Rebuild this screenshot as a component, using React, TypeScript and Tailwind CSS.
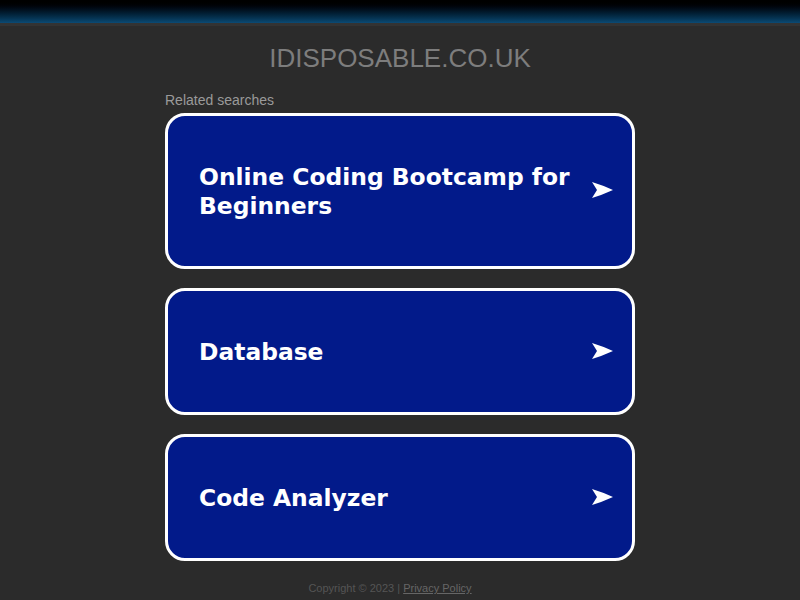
import React from 'react';

const searches = ['Online Coding Bootcamp for Beginners', 'Database', 'Code Analyzer'];

const Arrow = () => (
  <svg width="21" height="18" viewBox="0 0 21 18" className="shrink-0 mb-[4px]">
    <path d="M0 1 Q10 4 21 9 Q10 14 0 17 L5 9 Z" fill="#ffffff" />
  </svg>
);

export default function App() {
  return (
    <div className="min-h-[600px] w-full bg-[#2b2b2b] flex flex-col" style={{ fontFamily: '"Liberation Sans", Arial, sans-serif' }}>
      {/* top bar */}
      <div className="h-[23px] bg-gradient-to-b from-[#000000] to-[#0b4a74]" />
      <div className="h-[3px] bg-[#333333]" />

      <div className="w-[470px] mx-auto flex flex-col">
        <h1 className="text-center text-[26px] leading-[30px] text-[#7d7d7d] mt-[17px]">IDISPOSABLE.CO.UK</h1>

        <p className="text-[14px] leading-[16px] text-[#9a9a9a] mt-[19px] mb-[5px]">Related searches</p>

        <div className="flex flex-col gap-[19px]">
          {searches.map((s) => (
            <a
              key={s}
              href="#"
              className="flex items-center justify-between border-[3px] border-white rounded-[20px] bg-[#021a8a] pl-[31px] pr-[19px] pt-[47px] pb-[45px] no-underline"
            >
              <span
                className="flex-1 text-white font-bold text-[23.4px] leading-[29px] pr-[6px]"
                style={{ fontFamily: '"DejaVu Sans", Verdana, sans-serif' }}
              >
                {s}
              </span>
              <Arrow />
            </a>
          ))}
        </div>

        <div className="text-center text-[11px] leading-[14px] text-[#555555] mt-[20px] pr-[20px]">
          Copyright © 2023 | <a href="#" className="underline text-[#666666]">Privacy Policy</a>
        </div>
      </div>
    </div>
  );
}
